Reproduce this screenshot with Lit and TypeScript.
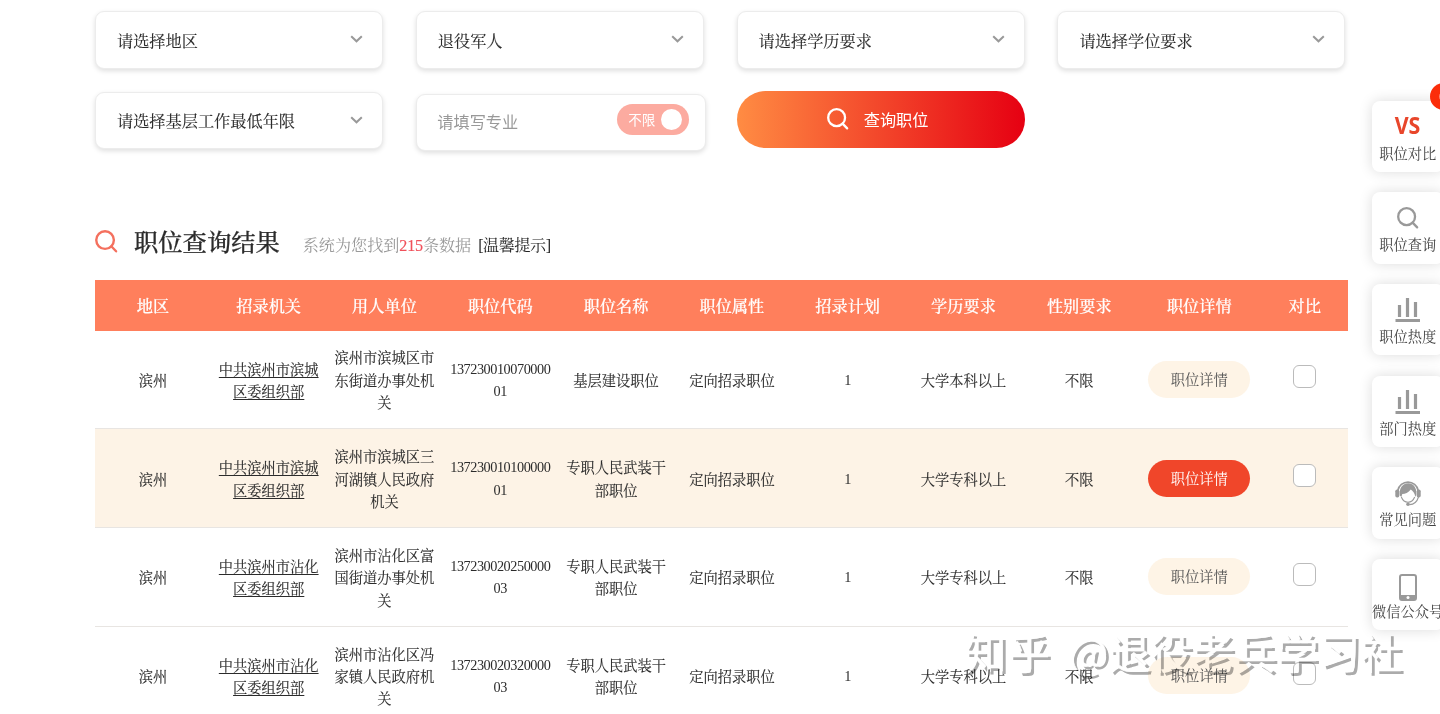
import { LitElement, html, css, svg } from "lit";
import { customElement } from "lit/decorators.js";
import { classMap } from "lit/directives/class-map.js";

const HEADERS = ["地区", "招录机关", "用人单位", "职位代码", "职位名称", "职位属性", "招录计划", "学历要求", "性别要求", "职位详情", "对比"];

interface Row { org: string[]; unit: string[]; code: string[]; name: string[]; edu: string; active?: boolean; }

const ROWS: Row[] = [
  { org: ["中共滨州市滨城", "区委组织部"], unit: ["滨州市滨城区市", "东街道办事处机", "关"], code: ["137230010070000", "01"], name: ["基层建设职位"], edu: "大学本科以上" },
  { org: ["中共滨州市滨城", "区委组织部"], unit: ["滨州市滨城区三", "河湖镇人民政府", "机关"], code: ["137230010100000", "01"], name: ["专职人民武装干", "部职位"], edu: "大学专科以上", active: true },
  { org: ["中共滨州市沾化", "区委组织部"], unit: ["滨州市沾化区富", "国街道办事处机", "关"], code: ["137230020250000", "03"], name: ["专职人民武装干", "部职位"], edu: "大学专科以上" },
  { org: ["中共滨州市沾化", "区委组织部"], unit: ["滨州市沾化区冯", "家镇人民政府机", "关"], code: ["137230020320000", "03"], name: ["专职人民武装干", "部职位"], edu: "大学专科以上" },
];

const lines = (parts: string[]) => parts.map((p, i) => (i ? html`<br />${p}` : html`${p}`));

const searchShape = svg`<circle cx="10.5" cy="10.5" r="9.2" fill="none" stroke="currentColor"/><path d="M17 17 L22 22.200" fill="none" stroke="currentColor" stroke-linecap="round"/>`;

const icons = {
  search: html`<svg class="ico" viewBox="0 0 24 24" stroke-width="2.5">${searchShape}</svg>`,
  bars: html`<svg class="ico bars" viewBox="0 0 26 26"><path d="M4.500 9v12M12.500 2v19M20.500 6v15" fill="none" stroke="currentColor" stroke-width="3.200"/><path d="M.500 24.500h24.500" stroke="currentColor" stroke-width="3"/></svg>`,
  service: html`<svg class="ico bars" viewBox="0 0 26 26">
    <path d="M2.800 10.500A10.400 10.400 0 0 1 23.200 10.500" fill="none" stroke="currentColor" stroke-width="1.600"/>
    <path d="M4.800 15.500C2.800 -.5 22.800 -1 21.300 14.500L20.300 17C19.800 12.800 17.800 10.800 15.800 9.500 13.300 12.800 10.300 13.800 7.300 14L6.300 17z" fill="currentColor"/>
    <rect x="0.300" y="9.500" width="4" height="8" rx="1.800" fill="currentColor"/>
    <rect x="21.700" y="9.500" width="4" height="8" rx="1.800" fill="currentColor"/>
    <path d="M6.300 17c1.500 3.600 4 5.200 6.700 5.200s5.200-1.600 6.700-5.200M23.500 17c-1.500 5-5 7.500-9 7.600" fill="none" stroke="currentColor" stroke-width="1.100"/>
    <circle cx="13" cy="24.200" r="1.800" fill="currentColor"/></svg>`,
  phone: html`<svg class="ico phone" viewBox="0 0 18 27"><rect x="1" y="1" width="16" height="25" rx="2" fill="none" stroke="currentColor" stroke-width="2"/><path d="M1 21h16V25.500H1z" fill="currentColor"/><circle cx="9" cy="23.500" r="1.500" fill="#fff"/></svg>`,
};

const TOOLS = [
  { label: "职位对比", icon: html`<span class="vs">VS</span>` },
  { label: "职位查询", icon: icons.search },
  { label: "职位热度", icon: icons.bars },
  { label: "部门热度", icon: icons.bars },
  { label: "常见问题", icon: icons.service },
  { label: "微信公众号", icon: icons.phone },
];

@customElement("app-root")
export class AppRoot extends LitElement {
  static styles = css`
    :host { display: block; position: relative; height: 714px; overflow: hidden; background: #fff; color: #2b2b2b;
      font-family: "Liberation Serif", "Noto Serif CJK SC", "Noto Sans CJK SC", serif; }
    * { box-sizing: border-box; }
    .page { width: 1253px; margin-left: 95px; padding-top: 11px; }
    .filters { display: grid; grid-template-columns: repeat(4, 288px); grid-template-rows: 58px 57px; column-gap: 32.800px; row-gap: 22.500px; }
    .field { height: 57.500px; padding: 0 19px 0 21px; display: flex; align-items: center; justify-content: space-between;
      border: 1px solid #ececec; border-radius: 9px; background: #fff; box-shadow: 0 2px 5px rgba(0,0,0,.13); font-size: 16.200px; white-space: nowrap;
      -webkit-text-stroke: .12px currentColor; }
    .field.input { width: 290.500px; height: 57px; margin-top: 2px; padding: 0 16px 2px 20.500px; color: #999; font-family: "Noto Sans CJK SC", sans-serif; -webkit-text-stroke: 0; }
    .chev { width: 13px; height: 8px; color: #999; margin-top: -1px; }
    .toggle { width: 72px; height: 31px; border-radius: 16px; background: #fcaba0; color: #fff; font-size: 13.500px; display: flex; align-items: center;
      justify-content: space-between; padding: 0 7px 0 11px; margin-top: -4px; }
    .knob { width: 21px; height: 21px; border-radius: 50%; background: #fff; }
    .submit { height: 57px; border: 0; border-radius: 29px; background: linear-gradient(90deg, #ff8c43, #e60012); color: #fff; margin-top: -.500px;
      font-family: "Noto Sans CJK SC", sans-serif; font-size: 16.200px; font-weight: 400; display: flex; align-items: center; justify-content: center; gap: 15px; padding: 0 6px 2px 0; }
    .ico { width: 22px; height: 22px; display: block; overflow: visible; }
    .title { display: flex; align-items: center; height: 40px; margin-top: 73.500px; padding-bottom: 1px; }
    .title .ico { color: #f4705e; width: 23px; height: 23px; margin-top: -1px; }
    .title h2 { margin: 2px 0 0 16px; font-size: 24.300px; line-height: 38px; font-weight: 500; -webkit-text-stroke: .25px currentColor; }
    .found { margin-left: 23px; padding-top: 4px; font-size: 16.100px; color: #999; white-space: nowrap; }
    .found b { font-weight: 400; color: #f0505a; letter-spacing: -.2px; -webkit-text-stroke: .15px currentColor; }
    .found a { color: #222; margin-left: 7px; letter-spacing: -.45px; }
    .row { display: grid; grid-template-columns: repeat(9, 115.800px) 124.300px 86.500px; height: 98.800px; align-items: center;
      border-bottom: 1px solid #e8e5e2; text-align: center; font-size: 14.250px; line-height: 22.300px; white-space: nowrap; }
    .row.active { background: #fdf3e6; }
    .row.head { height: 51px; background: #ff7f5c; color: #fff; font-size: 16.200px; font-weight: 500; border: 0; margin-top: 17.500px; padding-top: 5px; -webkit-text-stroke: .2px currentColor; }
    .cell { padding-top: 3px; -webkit-text-stroke: .1px currentColor; }
    .org { text-decoration: underline; text-underline-offset: 2px; }
    .num { letter-spacing: -.45px; padding-top: 1px; }
    .detail { display: inline-block; width: 102px; height: 37px; line-height: 39px; border-radius: 19px; background: #fef4e6; color: #555; }
    .active .detail { background: #f0462a; color: #fff; }
    .check { display: inline-block; width: 23px; height: 23px; border: 1px solid #bbb; border-radius: 6px; background: #fff; vertical-align: middle; margin-bottom: 5px; }
    .tools { position: absolute; top: 100.500px; right: -4px; width: 72.500px; display: flex; flex-direction: column; gap: 20.200px; }
    .tool { position: relative; height: 71.500px; display: flex; flex-direction: column; align-items: center; border-radius: 8px; background: #fff;
      box-shadow: 0 0 14px rgba(0,0,0,.14); color: #999; }
    .pic { height: 42px; padding-top: 9px; display: flex; align-items: center; justify-content: center; }
    .ico.bars { width: 26px; height: 26px; }
    .ico.phone { width: 18px; height: 27px; margin-top: 7px; }
    .vs { font: bold 22.500px/26px "Open Sans", sans-serif; color: #e8462b; transform: scaleX(.95); }
    .label { font-size: 14.250px; line-height: 23px; color: #444; white-space: nowrap; }
    .badge { position: absolute; left: 58px; top: -18px; width: 27px; height: 27px; border-radius: 50%; background: #fb2d0a; color: #fff; font-size: 16px; line-height: 27px; text-align: center; }
    .mark { position: absolute; left: 964.500px; top: 621px; font: 42px/60px "Noto Sans CJK SC", sans-serif; color: #fff; mix-blend-mode: multiply;
      -webkit-text-stroke: .5px #fff; text-shadow: 3px 3px 0 #ababab; white-space: nowrap; display: flex; gap: 17px; }
    .mark span:first-child { letter-spacing: 1.500px; }
  `;

  private select(label: string) {
    return html`<div class="field"><span>${label}</span><svg class="chev" viewBox="0 0 13 8"><path d="M1.200 1.200 6.500 6.300 11.800 1.200" fill="none" stroke="currentColor" stroke-width="2"/></svg></div>`;
  }

  render() {
    return html`
      <main class="page">
        <section class="filters">
          ${["请选择地区", "退役军人", "请选择学历要求", "请选择学位要求", "请选择基层工作最低年限"].map((l) => this.select(l))}
          <div class="field input"><span>请填写专业</span><span class="toggle">不限<i class="knob"></i></span></div>
          <button class="submit">${icons.search}<span>查询职位</span></button>
        </section>
        <header class="title">${icons.search}
          <h2>职位查询结果</h2>
          <span class="found">系统为您找到<b>215</b>条数据<a>[温馨提示]</a></span>
        </header>
        <section>
          <div class="row head">${HEADERS.map((h) => html`<span>${h}</span>`)}</div>
          ${ROWS.map((r) => html`<div class=${classMap({ row: true, active: !!r.active })}>
            <span class="cell">滨州</span><span class="cell org">${lines(r.org)}</span><span class="cell">${lines(r.unit)}</span>
            <span class="num">${lines(r.code)}</span><span class="cell">${lines(r.name)}</span><span class="cell">定向招录职位</span>
            <span class="num">1</span><span class="cell">${r.edu}</span><span class="cell">不限</span>
            <span><a class="detail">职位详情</a></span><span><i class="check"></i></span>
          </div>`)}
        </section>
      </main>
      <aside class="tools">
        ${TOOLS.map((t, i) => html`<div class="tool"><div class="pic">${t.icon}</div><span class="label">${t.label}</span>${i === 0 ? html`<span class="badge">0</span>` : ""}</div>`)}
      </aside>
      <div class="mark"><span>知乎</span><span>@退役老兵学习社</span></div>
    `;
  }
}
